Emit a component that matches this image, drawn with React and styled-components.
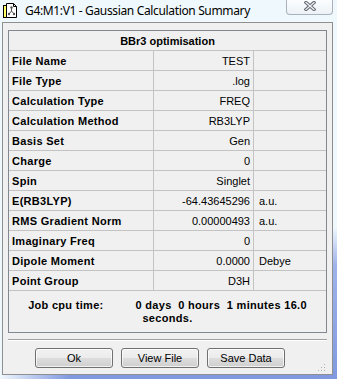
import React from "react";
import styled, { createGlobalStyle } from "styled-components";

const GlobalStyle = createGlobalStyle`
  html, body {
    margin: 0;
    padding: 0;
  }
  body {
    width: 337px;
    height: 379px;
    overflow: hidden;
    font-family: "Liberation Sans", Arial, sans-serif;
    background:
      linear-gradient(to right, #eff8fd 0, rgba(239, 248, 253, 0) 70px),
      linear-gradient(to bottom, #eff8fd 0%, #eff8fd 60%, #9fb3ea 70%, #7f98e0 100%);
  }
`;

const Window = styled.div`
  width: 337px;
  height: 379px;
  display: flex;
  flex-direction: column;
`;

const TitleBar = styled.div`
  height: 22px;
  display: flex;
  align-items: flex-start;
  padding-left: 3px;
`;

const AppIcon = styled.svg`
  margin-top: 3px;
  flex: none;
`;

const TitleText = styled.span`
  margin-left: 7px;
  font-family: "Noto Sans", "Open Sans", sans-serif;
  font-size: 12px;
  letter-spacing: -0.35px;
  line-height: 22px;
  color: #000;
  white-space: nowrap;
`;

const CloseButton = styled.div`
  margin-left: auto;
  margin-right: 4px;
  width: 47px;
  height: 15px;
  border: 1px solid #a9b1bd;
  border-top: none;
  border-radius: 0 0 4px 4px;
  background: linear-gradient(to bottom, #fbfdfe, #edf2f7);
  display: flex;
  justify-content: center;
  align-items: flex-start;
  padding-top: 1px;
  box-sizing: border-box;
`;

const Client = styled.div`
  position: relative;
  flex: 1;
  margin: 0 4px 4px 2px;
  border: 1px solid #8f8f8f;
  background: #f0f0f0;
  padding: 7px 5px 0 5px;
  display: flex;
  flex-direction: column;
`;

const Panel = styled.div`
  border: 1px solid #828790;
  background: #f0f0f0;
`;

const HeaderRow = styled.div`
  height: 19px;
  border-bottom: 1px solid #c3c3c3;
  display: flex;
  align-items: center;
  justify-content: center;
  font-size: 11px;
  font-weight: bold;
  color: #000;
`;

const Row = styled.div`
  display: grid;
  grid-template-columns: 145px 100px 72px;
  height: 20px;
`;

const Cell = styled.div`
  height: 19px;
  border-bottom: 1px solid #c3c3c3;
  border-right: ${({ $last }) => ($last ? "none" : "1px solid #c3c3c3")};
  display: flex;
  align-items: center;
  justify-content: ${({ $align }) => ($align === "right" ? "flex-end" : "flex-start")};
  padding: ${({ $align }) => ($align === "right" ? "0 3px 0 0" : "0 0 0 3px")};
  padding-left: ${({ $unit }) => ($unit ? "5px" : undefined)};
  font-size: 11px;
  font-weight: ${({ $bold }) => ($bold ? "bold" : "normal")};
  letter-spacing: ${({ $bold }) => ($bold ? "0.3px" : "normal")};
  color: #000;
  white-space: nowrap;
`;

const JobArea = styled.div`
  height: 41px;
  box-sizing: border-box;
  padding-top: 8px;
  display: flex;
  flex-direction: column;
  align-items: center;
  font-size: 11px;
  font-weight: bold;
  letter-spacing: 0.3px;
  line-height: 13px;
  color: #000;
`;

const JobLine = styled.div`
  display: flex;
  gap: 32px;
  white-space: pre;
`;

const Separator = styled.div`
  margin-top: 6px;
  border-top: 1px solid #a0a0a0;
  border-bottom: 1px solid #ffffff;
`;

const ButtonRow = styled.div`
  margin-top: 7px;
  padding-left: 27px;
  display: flex;
  gap: 8px;
`;

const Button = styled.button`
  width: 78px;
  height: 20px;
  padding: 0;
  border: 1px solid #707070;
  border-radius: 3px;
  background: linear-gradient(to bottom, #f2f2f2 0%, #ebebeb 50%, #dddddd 51%, #cfcfcf 100%);
  box-shadow: inset 0 0 0 1px rgba(255, 255, 255, 0.7);
  font-family: "Liberation Sans", Arial, sans-serif;
  font-size: 11px;
  color: #000;
`;

const SizeGrip = styled.svg`
  position: absolute;
  right: 6px;
  bottom: 2px;
`;

const rows = [
  ["File Name", "TEST", ""],
  ["File Type", ".log", ""],
  ["Calculation Type", "FREQ", ""],
  ["Calculation Method", "RB3LYP", ""],
  ["Basis Set", "Gen", ""],
  ["Charge", "0", ""],
  ["Spin", "Singlet", ""],
  ["E(RB3LYP)", "-64.43645296", "a.u."],
  ["RMS Gradient Norm", "0.00000493", "a.u."],
  ["Imaginary Freq", "0", ""],
  ["Dipole Moment", "0.0000", "Debye"],
  ["Point Group", "D3H", ""],
];

function DocIcon() {
  return (
    <AppIcon width="15" height="15" viewBox="0 0 15 15">
      <rect x="0.5" y="2.5" width="5" height="12" fill="#ffff66" stroke="#000" />
      <path d="M3.5 0.5 H10.5 L13.5 3.5 V14.5 H3.5 Z" fill="#fff" stroke="#000" />
      <path d="M10.5 0.5 V3.5 H13.5" fill="none" stroke="#000" />
      <path d="M8.5 4.5 V8 L6 11 M8.5 8 L11 11" fill="none" stroke="#555" />
      <circle cx="8.5" cy="4.5" r="1.2" fill="#555" />
      <circle cx="6" cy="11" r="1.2" fill="#555" />
      <circle cx="11" cy="11" r="1.2" fill="#555" />
    </AppIcon>
  );
}

function CloseGlyph() {
  return (
    <svg width="12" height="10" viewBox="0 0 12 10">
      <path d="M2 1.5 L10 8.5 M10 1.5 L2 8.5" stroke="#6b7079" strokeWidth="3.4" strokeLinecap="square" />
      <path d="M2 1.5 L10 8.5 M10 1.5 L2 8.5" stroke="#f4f6f9" strokeWidth="1.2" strokeLinecap="square" />
    </svg>
  );
}

export default function App() {
  return (
    <>
      <GlobalStyle />
      <Window>
        <TitleBar>
          <DocIcon />
          <TitleText>G4:M1:V1 - Gaussian Calculation Summary</TitleText>
          <CloseButton>
            <CloseGlyph />
          </CloseButton>
        </TitleBar>
        <Client>
          <Panel>
            <HeaderRow>BBr3 optimisation</HeaderRow>
            {rows.map(([label, value, unit]) => (
              <Row key={label}>
                <Cell $bold>{label}</Cell>
                <Cell $align="right">{value}</Cell>
                <Cell $last $unit>
                  {unit}
                </Cell>
              </Row>
            ))}
            <JobArea>
              <JobLine>
                <span>Job cpu time:</span>
                <span>0 days  0 hours  1 minutes 16.0</span>
              </JobLine>
              <div>seconds.</div>
            </JobArea>
          </Panel>
          <Separator />
          <ButtonRow>
            <Button>Ok</Button>
            <Button>View File</Button>
            <Button>Save Data</Button>
          </ButtonRow>
          <SizeGrip width="8" height="8" viewBox="0 0 8 8">
            <rect x="6" y="0" width="1" height="1" fill="#b0b0b0" />
            <rect x="3" y="3" width="1" height="1" fill="#b0b0b0" />
            <rect x="6" y="3" width="1" height="1" fill="#b0b0b0" />
            <rect x="0" y="6" width="1" height="1" fill="#b0b0b0" />
            <rect x="3" y="6" width="1" height="1" fill="#b0b0b0" />
            <rect x="6" y="6" width="1" height="1" fill="#b0b0b0" />
          </SizeGrip>
        </Client>
      </Window>
    </>
  );
}
